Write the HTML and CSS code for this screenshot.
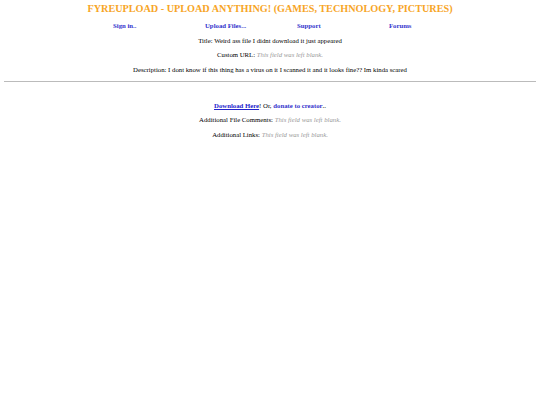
FILE: index.html
```html
<!DOCTYPE html>
<html>
<head>
<meta charset="utf-8">
<link rel="stylesheet" href="styles.css">
</head>
<body>
<h1 class="title">FYREUPLOAD - UPLOAD ANYTHING! (GAMES, TECHNOLOGY, PICTURES)</h1>
<nav class="nav">
  <a class="nav-link" href="#">Sign in..</a>
  <a class="nav-link" href="#">Upload Files...</a>
  <a class="nav-link" href="#">Support</a>
  <a class="nav-link" href="#">Forums</a>
</nav>
<p class="line">Title: Weird ass file I didnt download it just appeared</p>
<p class="line">Custom URL: <i class="blank">This field was left blank.</i></p>
<p class="line">Description: I dont know if this thing has a virus on it I scanned it and it looks fine?? Im kinda scared</p>
<hr class="rule">
<p class="line download"><a class="dl" href="#">Download Here</a>! Or, <a class="donate" href="#">donate to creator</a>..</p>
<p class="line">Additional File Comments: <i class="blank">This field was left blank.</i></p>
<p class="line">Additional Links: <i class="blank">This field was left blank.</i></p>
</body>
</html>
```
FILE: styles.css
```css
body {
  margin: 3px 4px;
  font-family: "Liberation Serif", "Times New Roman", serif;
  background: #fff;
  color: #000;
}
.title {
  margin: 0;
  text-align: center;
  font-size: 10.2px;
  font-weight: bold;
  color: #f7a526;
  line-height: 12px;
}
.nav {
  display: flex;
  margin: 7px 0 0 109px;
}
.nav-link {
  width: 92px;
  font-size: 6.75px;
  font-weight: bold;
  color: #3333cc;
  text-decoration: none;
  line-height: 8px;
}
.line {
  margin: 6.5px 0 0;
  text-align: center;
  font-size: 6.75px;
  line-height: 8px;
}
.blank {
  color: #999;
}
.rule {
  margin: 7px 0 0;
  border: 0;
  border-top: 1px solid #bbb;
}
.download {
  margin-top: 20px;
}
.dl {
  color: #2222cc;
  font-weight: bold;
}
.donate {
  color: #3333cc;
  font-weight: bold;
  text-decoration: none;
}
```
